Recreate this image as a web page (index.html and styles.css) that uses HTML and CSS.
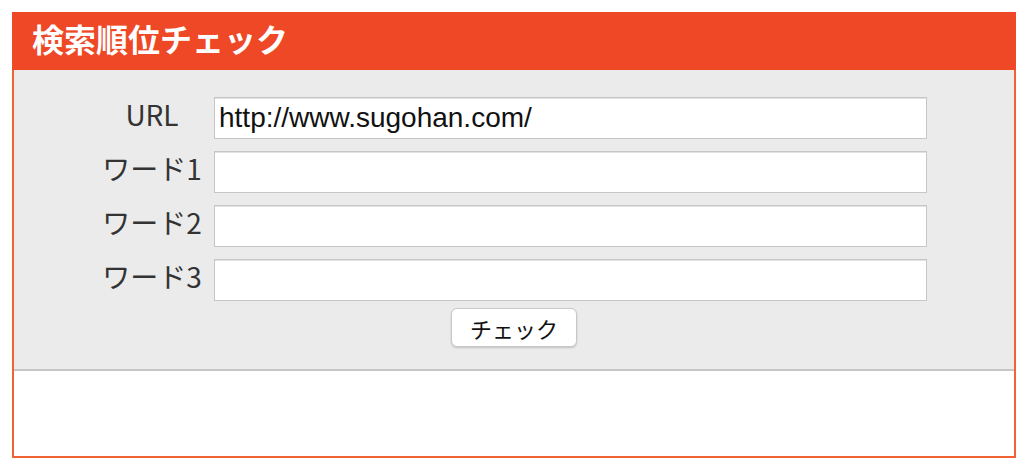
FILE: index.html
```html
<!DOCTYPE html>
<html lang="ja">
<head>
<meta charset="utf-8">
<title>検索順位チェック</title>
<link rel="stylesheet" href="styles.css">
</head>
<body>
<section class="widget">
  <h2 class="widget-title">検索順位チェック</h2>
  <div class="widget-body">
    <form class="rank-form">
      <div class="fields">
        <label class="field-label" for="url">URL</label>
        <input class="field-input" id="url" type="text" value="http://www.sugohan.com/">
        <label class="field-label" for="w1">ワード1</label>
        <input class="field-input" id="w1" type="text">
        <label class="field-label" for="w2">ワード2</label>
        <input class="field-input" id="w2" type="text">
        <label class="field-label" for="w3">ワード3</label>
        <input class="field-input" id="w3" type="text">
      </div>
      <div class="actions">
        <button class="check-btn" type="button">チェック</button>
      </div>
    </form>
    <div class="result"></div>
  </div>
</section>
</body>
</html>
```

FILE: styles.css
```css
html, body {
  margin: 0;
  padding: 0;
  background: #ffffff;
}

body {
  font-family: "Noto Sans CJK JP", "Liberation Sans", sans-serif;
}

.widget {
  margin: 12px;
  width: 1004px;
}

.widget-title {
  margin: 0;
  height: 58px;
  box-sizing: border-box;
  padding: 0 0 6px 20px;
  display: flex;
  align-items: center;
  background: #ee4826;
  color: #ffffff;
  font-family: "Noto Sans CJK JP", sans-serif;
  font-size: 32px;
  font-weight: 700;
  line-height: 1;
}

.widget-body {
  border: 2px solid #f26237;
  border-top: 0;
}

.rank-form {
  margin: 0;
  background: #ebebeb;
  border-bottom: 2px solid #c6c6c6;
  padding: 27px 0 22px;
}

.fields {
  display: grid;
  grid-template-columns: 106px 713px;
  column-gap: 9px;
  row-gap: 12px;
  padding-left: 85px;
  align-items: center;
}

.field-label {
  text-align: center;
  font-family: "Noto Sans CJK JP", sans-serif;
  font-size: 28px;
  line-height: 1;
  color: #333333;
  padding-bottom: 8px;
}

.field-input {
  box-sizing: border-box;
  height: 42px;
  width: 713px;
  margin: 0;
  padding: 0 4px;
  border: 1px solid #c6c6c6;
  box-shadow: inset 0 1px 0 #e2e2e2;
  background: #ffffff;
  font-family: "Liberation Sans", Arial, sans-serif;
  font-size: 28px;
  color: #111111;
  outline: none;
}

.actions {
  margin-top: 7px;
  text-align: center;
  line-height: 0;
}

.check-btn {
  box-sizing: border-box;
  width: 126px;
  height: 39px;
  margin: 0;
  padding: 0;
  border: 1px solid #c8c8c8;
  border-radius: 6px;
  background: #ffffff;
  box-shadow: 0 1px 2px rgba(0, 0, 0, 0.18);
  font-family: "Noto Sans CJK JP", sans-serif;
  font-size: 22px;
  line-height: 1;
  color: #111111;
}

.result {
  height: 85px;
  background: #ffffff;
}
```
